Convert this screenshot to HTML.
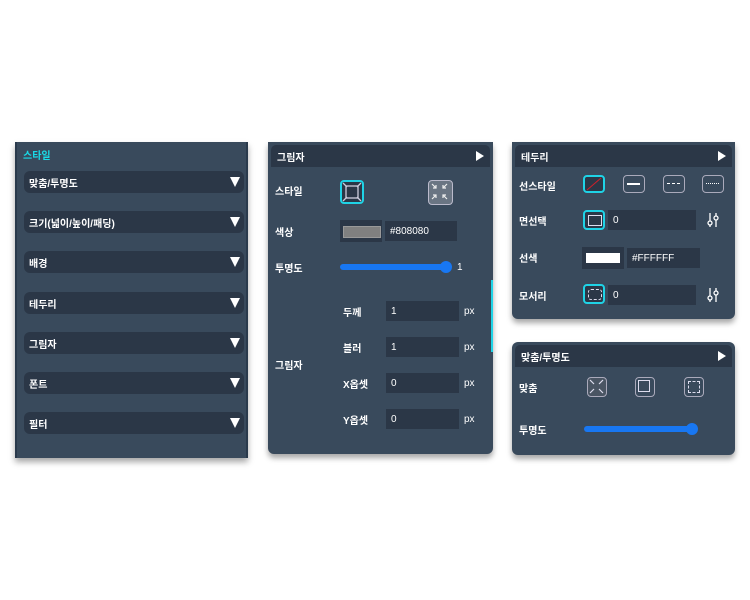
<!DOCTYPE html>
<html><head><meta charset="utf-8"><style>
body{margin:0;width:750px;height:600px;background:#fff;position:relative;font-family:"Liberation Sans","Noto Sans CJK KR",sans-serif;font-size:10px;color:#fff;overflow:hidden}
.p{position:absolute;background:#394a5c;box-shadow:0 4px 6px rgba(0,0,0,.35)}
.a{position:absolute;line-height:12px}
.row{position:absolute;left:7px;width:220px;height:22px;background:#2b3747;border-radius:6px;font-weight:bold;display:flex;align-items:center;padding-left:5px;box-sizing:border-box}
.tri{position:absolute;right:4px;top:6px;width:0;height:0;border-left:5px solid transparent;border-right:5px solid transparent;border-top:10px solid #fff}
.hd{position:absolute;left:3px;right:3px;top:3px;height:22px;background:#2b3747;border-radius:5px 5px 0 0;font-weight:bold;display:flex;align-items:center;padding-left:6px}
.rt{position:absolute;right:6px;top:6px;border-top:5px solid transparent;border-bottom:5px solid transparent;border-left:8px solid #fff}
.in{position:absolute;background:#2b3747;height:20px;display:flex;align-items:center;padding-left:5px;box-sizing:border-box}
.lb{position:absolute;font-weight:bold;line-height:12px;margin-top:3px}
.ib{position:absolute;width:22px;height:18px;border:1.5px solid #aab;border-radius:4px;box-sizing:border-box}
.sel{border:2px solid #1fd3e6;background:#2b3747}
.sl{position:absolute;height:6px;background:#1877f2;border-radius:3px}
.kn{position:absolute;width:12px;height:12px;border-radius:6px;background:#1877f2}
</style></head><body>

<div class="p" style="left:15px;top:142px;width:233px;height:316px;border-left:2px solid #2a3a4c;border-right:2px solid #2a3a4c;box-sizing:border-box">
<div class="a" style="left:6px;top:9px;color:#19dbe8;font-weight:bold">스타일</div>
<div class="row" style="top:29px">맞춤/투명도<div class="tri"></div></div>
<div class="row" style="top:69px">크기(넓이/높이/패딩)<div class="tri"></div></div>
<div class="row" style="top:109px">배경<div class="tri"></div></div>
<div class="row" style="top:150px">테두리<div class="tri"></div></div>
<div class="row" style="top:190px">그림자<div class="tri"></div></div>
<div class="row" style="top:230px">폰트<div class="tri"></div></div>
<div class="row" style="top:270px">필터<div class="tri"></div></div>
</div>

<div class="p" style="left:268px;top:142px;width:225px;height:312px;border-radius:0 0 6px 6px">
<div class="hd">그림자<div class="rt"></div></div>
<div class="a" style="left:223px;top:138px;width:2px;height:72px;background:#1fd3e6"></div>
<div class="lb" style="left:7px;top:42px">스타일</div>
<div class="ib sel" style="left:72px;top:38px;width:24px;height:24px"><svg width="20" height="20" viewBox="0 0 20 20" style="position:absolute;left:0;top:0" fill="none" stroke="#ccd" stroke-width="1.3"><rect x="4" y="4" width="12" height="12"/><path d="M1 1l4 4M19 1l-4 4M1 19l4-4M19 19l-4-4"/></svg></div>
<div class="ib" style="left:160px;top:38px;width:25px;height:25px;background:#6a7583;border-color:#bbc"><svg width="21" height="21" viewBox="0 0 21 21" style="position:absolute;left:0;top:0" fill="none" stroke="#eee" stroke-width="1.2"><path d="M3 3l4 4M18 3l-4 4M3 18l4-4M18 18l-4-4M7 4v3H4M14 4v3h3M7 17v-3H4M14 17v-3h3"/></svg></div>
<div class="lb" style="left:7px;top:83px">색상</div>
<div class="in" style="left:72px;top:78px;width:42px;height:22px"></div>
<div class="a" style="left:75px;top:84px;width:36px;height:10px;background:#808080;border:1px solid #999"></div>
<div class="in" style="left:117px;top:79px;width:72px">#808080</div>
<div class="lb" style="left:7px;top:119px">투명도</div>
<div class="sl" style="left:72px;top:122px;width:110px"></div>
<div class="kn" style="left:172px;top:119px"></div>
<div class="a" style="left:189px;top:120px">1</div>
<div class="lb" style="left:7px;top:216px">그림자</div>
<div class="lb" style="left:75px;top:163px">두께</div><div class="in" style="left:118px;top:159px;width:73px">1</div><div class="a" style="left:196px;top:164px">px</div>
<div class="lb" style="left:75px;top:199px">블러</div><div class="in" style="left:118px;top:195px;width:73px">1</div><div class="a" style="left:196px;top:200px">px</div>
<div class="lb" style="left:75px;top:235px">X옵셋</div><div class="in" style="left:118px;top:231px;width:73px">0</div><div class="a" style="left:196px;top:236px">px</div>
<div class="lb" style="left:75px;top:271px">Y옵셋</div><div class="in" style="left:118px;top:267px;width:73px">0</div><div class="a" style="left:196px;top:272px">px</div>
</div>

<div class="p" style="left:512px;top:142px;width:223px;height:177px;border-radius:0 0 6px 6px">
<div class="hd">테두리<div class="rt"></div></div>
<div class="lb" style="left:7px;top:37px">선스타일</div>
<div class="ib sel" style="left:71px;top:33px"><svg width="18" height="14" style="position:absolute;left:0;top:0"><path d="M2 13L16 1" stroke="#d0202a" stroke-width="1"/></svg></div>
<div class="ib" style="left:111px;top:33px"><div class="a" style="left:3px;top:7px;width:13px;height:1.5px;background:#fff"></div></div>
<div class="ib" style="left:151px;top:33px"><div class="a" style="left:3px;top:7px;width:13px;border-top:1.5px dashed #fff"></div></div>
<div class="ib" style="left:190px;top:33px"><div class="a" style="left:3px;top:7px;width:13px;border-top:1px dotted #fff"></div></div>
<div class="lb" style="left:7px;top:72px">면선택</div>
<div class="ib sel" style="left:71px;top:68px;height:20px"><div class="a" style="left:3px;top:3px;width:12px;height:9px;border:1.5px solid #dde"></div></div>
<div class="in" style="left:96px;top:68px;width:88px">0</div>
<svg class="a" style="left:195px;top:71px" width="12" height="14" fill="none" stroke="#fff" stroke-width="1.3"><path d="M3 0v14M9 0v14"/><circle cx="3" cy="10" r="2" fill="#394a5c"/><circle cx="9" cy="5" r="2" fill="#394a5c"/></svg>
<div class="lb" style="left:7px;top:109px">선색</div>
<div class="in" style="left:70px;top:105px;width:42px;height:22px"></div>
<div class="a" style="left:74px;top:111px;width:34px;height:10px;background:#fff"></div>
<div class="in" style="left:115px;top:106px;width:73px">#FFFFFF</div>
<div class="lb" style="left:7px;top:147px">모서리</div>
<div class="ib sel" style="left:71px;top:142px;height:20px"><div class="a" style="left:3px;top:3px;width:12px;height:9px;border:1.5px dashed #dde;border-radius:3px"></div></div>
<div class="in" style="left:96px;top:143px;width:88px">0</div>
<svg class="a" style="left:195px;top:146px" width="12" height="14" fill="none" stroke="#fff" stroke-width="1.3"><path d="M3 0v14M9 0v14"/><circle cx="3" cy="10" r="2" fill="#394a5c"/><circle cx="9" cy="5" r="2" fill="#394a5c"/></svg>
</div>

<div class="p" style="left:512px;top:342px;width:223px;height:113px;border-radius:6px">
<div class="hd">맞춤/투명도<div class="rt"></div></div>
<div class="lb" style="left:7px;top:39px">맞춤</div>
<div class="ib" style="left:75px;top:35px;width:20px;height:20px;background:#4a5563"><svg width="17" height="17" style="position:absolute;left:0;top:0" fill="none" stroke="#dde" stroke-width="1.2"><path d="M2 2l4 4M15 2l-4 4M2 15l4-4M15 15l-4-4"/></svg></div>
<div class="ib" style="left:123px;top:35px;width:20px;height:20px"><div class="a" style="left:2px;top:2px;width:10px;height:10px;border:1.5px solid #dde"></div></div>
<div class="ib" style="left:172px;top:35px;width:20px;height:20px"><div class="a" style="left:3px;top:3px;width:10px;height:10px;border:1.5px dashed #dde"></div></div>
<div class="lb" style="left:7px;top:81px">투명도</div>
<div class="sl" style="left:72px;top:84px;width:108px"></div>
<div class="kn" style="left:174px;top:81px"></div>
</div>
</body></html>
